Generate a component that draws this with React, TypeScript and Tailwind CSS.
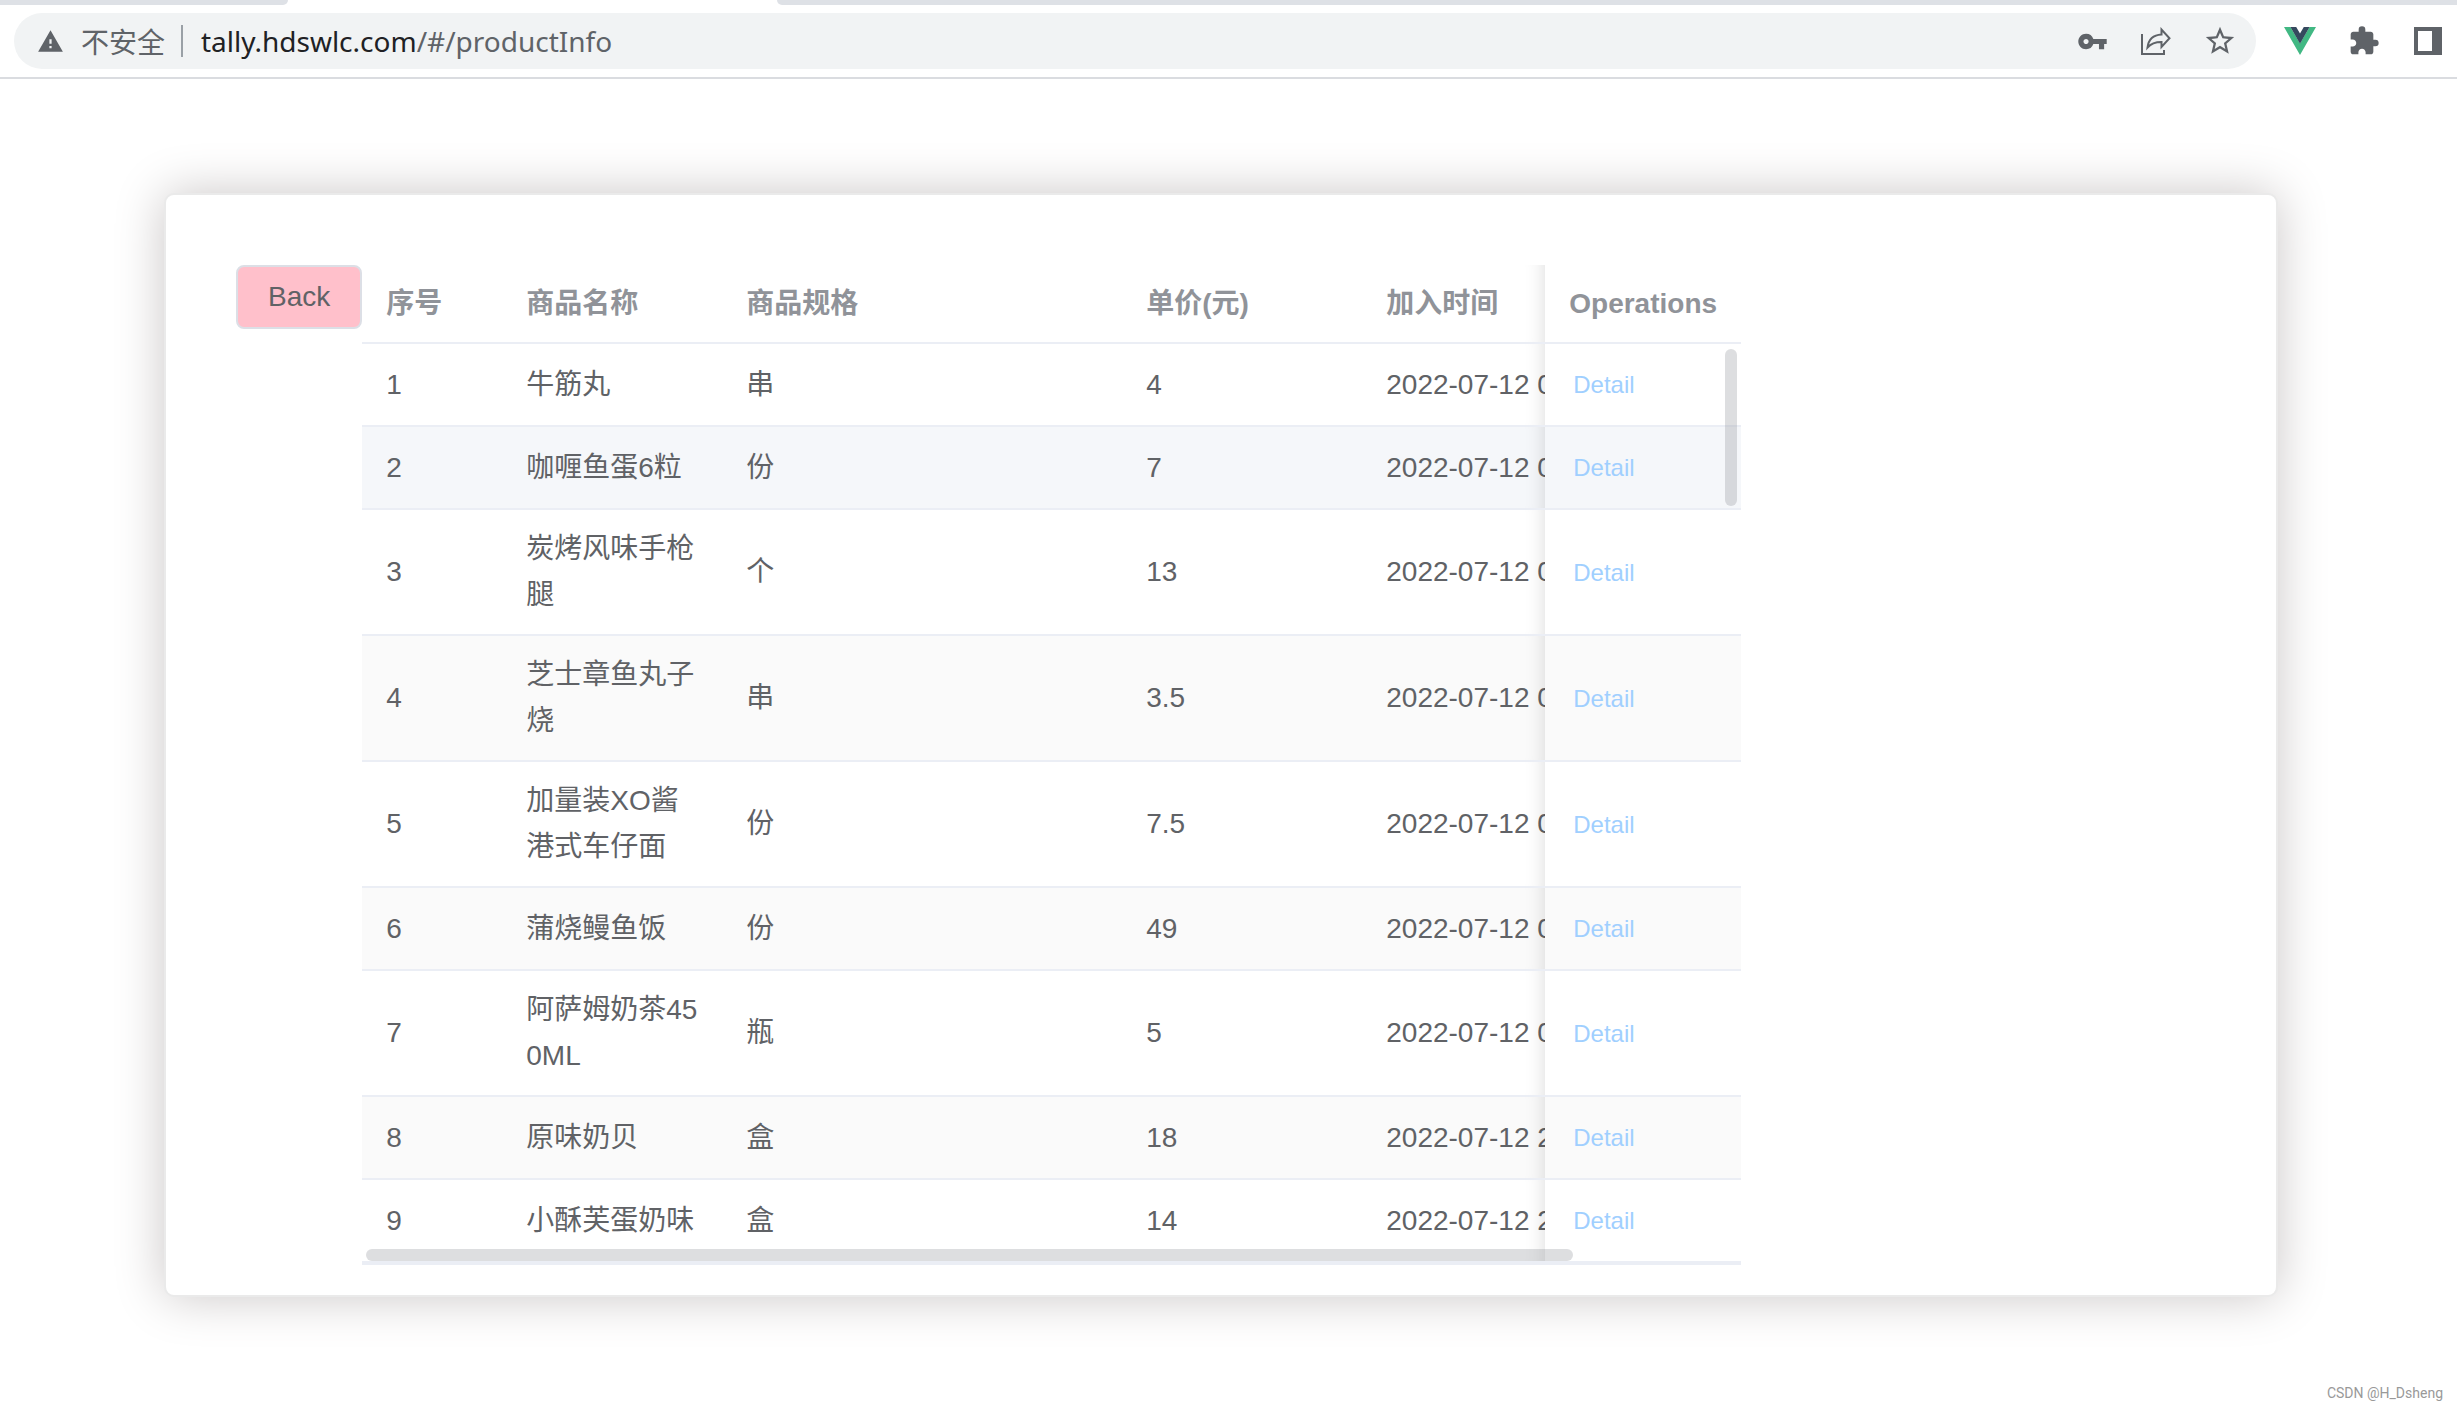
import { MdExtension, MdStarBorder, MdVpnKey, MdWarning } from 'react-icons/md';

type Product = {
  id: number;
  name: string;
  spec: string;
  price: string;
  time: string;
};

const products: Product[] = [
  { id: 1, name: '牛筋丸', spec: '串', price: '4', time: '2022-07-12 0' },
  { id: 2, name: '咖喱鱼蛋6粒', spec: '份', price: '7', time: '2022-07-12 0' },
  { id: 3, name: '炭烤风味手枪腿', spec: '个', price: '13', time: '2022-07-12 0' },
  { id: 4, name: '芝士章鱼丸子烧', spec: '串', price: '3.5', time: '2022-07-12 0' },
  { id: 5, name: '加量装XO酱港式车仔面', spec: '份', price: '7.5', time: '2022-07-12 0' },
  { id: 6, name: '蒲烧鳗鱼饭', spec: '份', price: '49', time: '2022-07-12 0' },
  { id: 7, name: '阿萨姆奶茶450ML', spec: '瓶', price: '5', time: '2022-07-12 0' },
  { id: 8, name: '原味奶贝', spec: '盒', price: '18', time: '2022-07-12 2' },
  { id: 9, name: '小酥芙蛋奶味', spec: '盒', price: '14', time: '2022-07-12 2' },
];

const ACTIVE_ID = 2;

const rowColor = (id: number) => {
  if (id === ACTIVE_ID) return 'bg-[#f5f7fa]';
  return id % 2 === 0 ? 'bg-[#fafafa]' : 'bg-white';
};

const ShareIcon = () => (
  <svg width="30" height="28" viewBox="0 0 30 28" fill="none" stroke="currentColor" strokeWidth="2">
    <path d="M1 7v20h22v-4" />
    <path d="M20.500 2.500v5C12 8 7.500 12.500 6.500 20.500C10 16.500 14 15 20.500 15v5L28.500 11.200z" />
  </svg>
);

const VueIcon = () => (
  <svg width="32" height="28" viewBox="0 0 32 28">
    <path d="M0 0h6.400L16 16.500 25.600 0H32L16 28z" fill="#41b883" />
    <path d="M6.400 0h5.800L16 6.600 19.800 0h5.800L16 16.800z" fill="#35495e" />
  </svg>
);

const SidePanelIcon = () => (
  <svg width="28" height="28" viewBox="0 0 28 28">
    <path fillRule="evenodd" d="M0 0h28v28H0zM4 4v20h14V4z" fill="currentColor" />
  </svg>
);

const BrowserBar = () => (
  <header className="overflow-hidden">
    <div className="flex h-[5px]">
      <div className="w-[288px] rounded-br-lg bg-[#dee1e6]" />
      <div className="w-[489px]" />
      <div className="flex-1 rounded-bl-lg bg-[#dee1e6]" />
    </div>
    <div className="border-b-2 border-[#dadce0]">
      <div className="-mr-[3px] flex py-2 pl-[14px] text-[#5f6368]">
        <div className="mr-3 flex h-14 flex-1 items-center rounded-full bg-[#f1f3f4] pr-1 pl-[23px] text-[28px]">
          <MdWarning size={27} />
          <span className="ml-[17px] font-['Noto_Sans_CJK_SC',sans-serif]">不安全</span>
          <span className="mx-4 h-8 w-[2px] bg-[#9aa0a6]" />
          <span className="flex-1 pl-[2px] font-['Noto_Sans',sans-serif]">
            <span className="text-[#202124]">tally.hdswlc.com</span>/#/productInfo
          </span>
          <button aria-label="Passwords" className="flex w-16 justify-center">
            <MdVpnKey size={31} />
          </button>
          <button aria-label="Share" className="flex w-16 justify-center">
            <ShareIcon />
          </button>
          <button aria-label="Bookmark" className="flex w-16 justify-center">
            <MdStarBorder size={34} />
          </button>
        </div>
        <button aria-label="Vue devtools" className="flex w-16 items-center justify-center">
          <VueIcon />
        </button>
        <button aria-label="Extensions" className="flex w-16 items-center justify-center">
          <MdExtension size={32} />
        </button>
        <button aria-label="Side panel" className="flex w-16 items-center justify-center">
          <SidePanelIcon />
        </button>
      </div>
    </div>
  </header>
);

// shadow cast to the left by the fixed column
const fixedShadow =
  "relative before:absolute before:inset-y-0 before:right-full before:w-5 before:shadow-[inset_-20px_0_20px_-20px_rgba(0,0,0,0.15)] before:content-['']";

const ProductTable = () => (
  <div className="relative border-b-2 border-[#ebeef5]">
    <table className="w-[1379px] table-fixed border-separate border-spacing-0 text-left leading-[46px]">
      <colgroup>
        <col className="w-[140px]" />
        <col className="w-[220px]" />
        <col className="w-[400px]" />
        <col className="w-[240px]" />
        <col className="w-[183px]" />
        <col className="w-[196px]" />
      </colgroup>
      <thead className="text-[#909399]">
        <tr className="h-[79px] *:border-b-2 *:border-[#ebeef5] *:pl-6">
          <th>序号</th>
          <th>商品名称</th>
          <th>商品规格</th>
          <th>单价(元)</th>
          <th>加入时间</th>
          <th className={fixedShadow}>Operations</th>
        </tr>
      </thead>
      <tbody>
        {products.map((item) => (
          <tr key={item.id} className={`h-[83px] *:border-b-2 *:border-[#ebeef5] *:py-4 *:pl-6 ${rowColor(item.id)}`}>
            <td>{item.id}</td>
            <td className="pr-6 break-all">{item.name}</td>
            <td>{item.spec}</td>
            <td>{item.price}</td>
            <td className="overflow-hidden whitespace-nowrap">{item.time}</td>
            <td className={fixedShadow}>
              <button className="px-1 text-[24px] text-[#a0cfff]">Detail</button>
            </td>
          </tr>
        ))}
      </tbody>
    </table>
    <div className="absolute top-[84px] right-1 h-[157px] w-3 rounded-full bg-[#909399]/30" />
    <div className="absolute bottom-[2px] left-1 h-3 w-[1207px] rounded-full bg-[#909399]/30" />
  </div>
);

export default function App() {
  return (
    <div className="flex min-h-screen flex-col bg-white font-['Liberation_Sans','Noto_Sans_CJK_SC',sans-serif] text-[28px] text-[#606266]">
      <BrowserBar />
      <main className="mt-[114px] mr-[179px] ml-[164px] flex items-start rounded-[10px] border-2 border-[#eaeaea] bg-white px-[70px] pt-[70px] pb-[30px] shadow-[0_0_50px_#cac6c6]">
        <button className="h-16 rounded-lg border-2 border-[#dcdfe6] bg-[#ffc0cb] px-[30px]">Back</button>
        <ProductTable />
      </main>
      <footer className="mt-auto pr-[14px] pb-[6px] text-right font-[Roboto,sans-serif] text-[14px] text-[#999]">
        CSDN @H_Dsheng
      </footer>
    </div>
  );
}
